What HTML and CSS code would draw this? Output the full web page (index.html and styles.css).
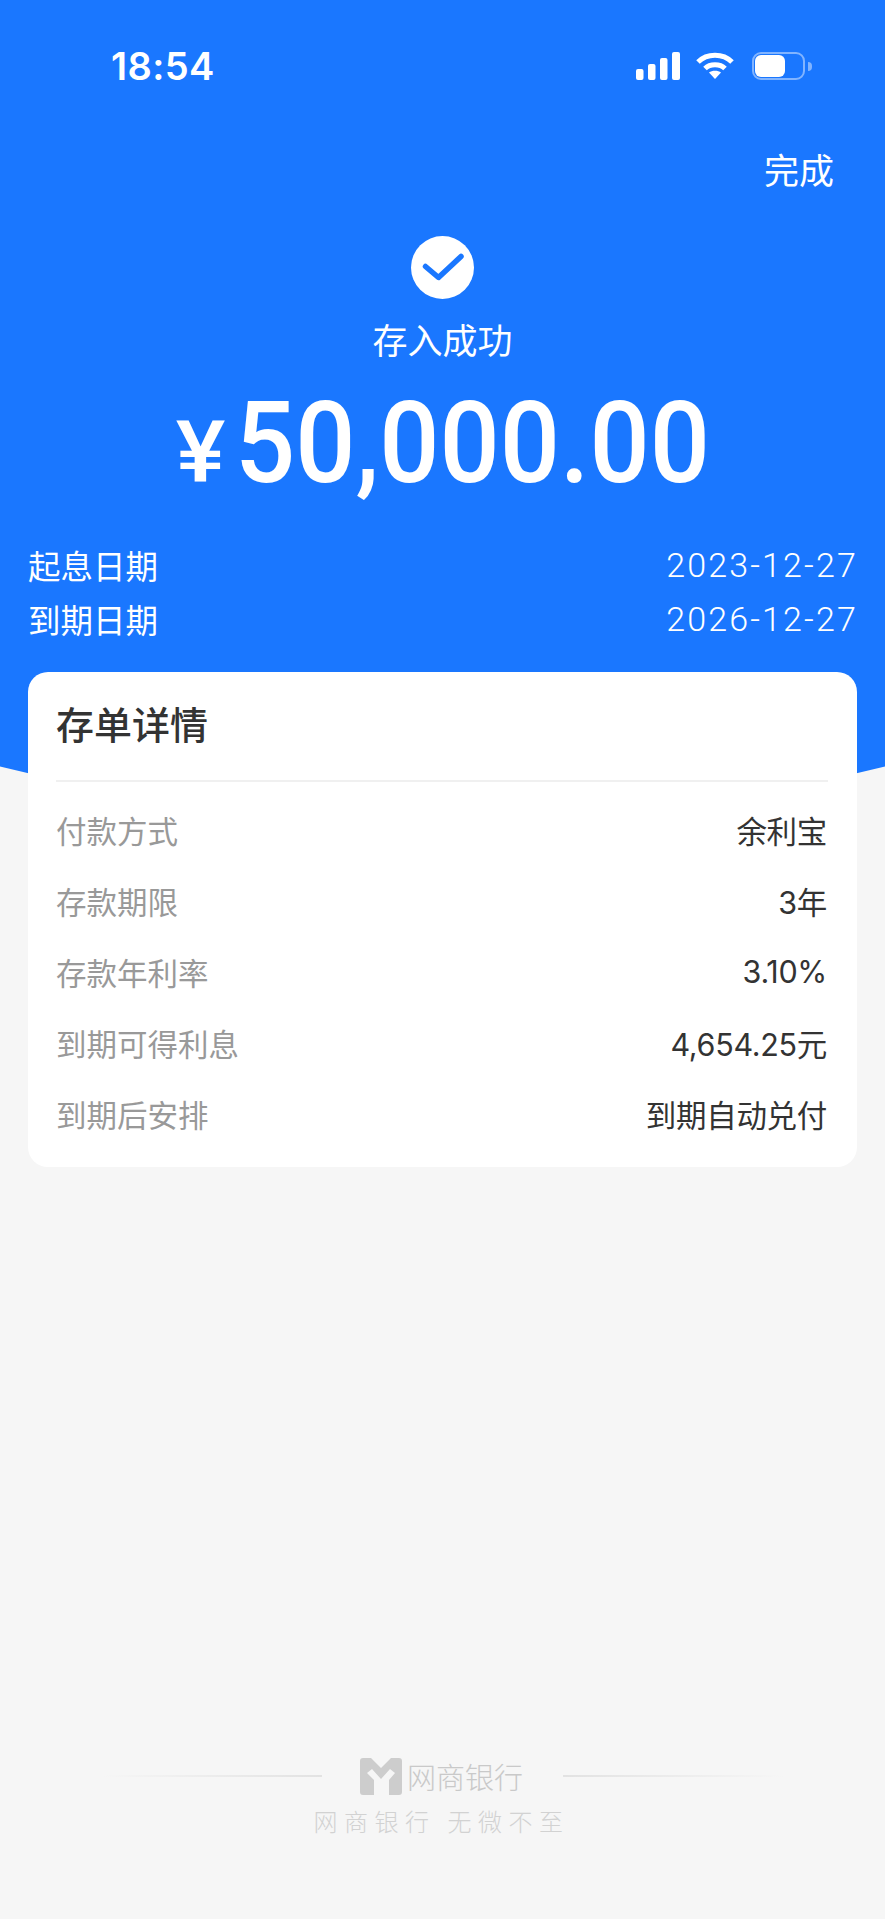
FILE: index.html
```html
<!DOCTYPE html>
<html lang="zh-CN">
  <head>
    <meta charset="UTF-8" />
    <meta name="viewport" content="width=device-width, initial-scale=1.0" />
    <title>存入成功</title>
    <link rel="stylesheet" href="styles.css">
  </head>
  <body>
    <div class="page">
      <div class="hero">
        <div class="status">
          <span class="time">18:54</span>
          <div class="status-icons">
            <svg class="signal" width="44" height="28" viewBox="0 0 44 28">
              <rect x="0" y="17" width="7.5" height="11" rx="2" />
              <rect x="12" y="12" width="7.5" height="16" rx="2" />
              <rect x="24" y="6" width="7.5" height="22" rx="2" />
              <rect x="36" y="0" width="8" height="28" rx="2" />
            </svg>
            <svg class="wifi" width="38" height="28" viewBox="0 0 38 28">
              <path d="M2 10 C11 1 27 1 36 10" />
              <path d="M9 16.5 C14 11.5 24 11.5 29 16.5" />
              <path class="wifi-dot" d="M13 20.5 C16 18 22 18 25 20.5 L19 27 Z" />
            </svg>
            <div class="battery"><i></i></div>
            <div class="battery-nub"></div>
          </div>
        </div>
        <div class="done-row"><a href="#" class="done">完成</a></div>
        <div class="check">
          <svg width="63" height="63" viewBox="0 0 63 63">
            <circle cx="31.5" cy="31.5" r="31.5" fill="#fff" />
            <path d="M14.5 30.5 L27.5 41.5 L50 20.5" fill="none" stroke="#1a77ff" stroke-width="5.5" stroke-linecap="round" stroke-linejoin="round" />
          </svg>
        </div>
        <div class="success">存入成功</div>
        <div class="amount"><span class="yen">¥</span><span class="num">50,000.00</span></div>
        <div class="date-row"><span>起息日期</span><span class="date">2023-12-27</span></div>
        <div class="date-row"><span>到期日期</span><span class="date">2026-12-27</span></div>
      </div>

      <div class="card">
        <div class="card-title">存单详情</div>
        <div class="row"><span class="label">付款方式</span><span class="value">余利宝</span></div>
        <div class="row"><span class="label">存款期限</span><span class="value">3年</span></div>
        <div class="row"><span class="label">存款年利率</span><span class="value">3.10%</span></div>
        <div class="row"><span class="label">到期可得利息</span><span class="value">4,654.25元</span></div>
        <div class="row"><span class="label">到期后安排</span><span class="value">到期自动兑付</span></div>
      </div>

      <div class="footer">
        <div class="brand">
          <div class="brand-line"></div>
          <svg class="brand-logo" width="42" height="37" viewBox="0 0 42 37">
            <path d="M3 0 H11 L21 10 L31 0 H39 Q42 0 42 3 V34 Q42 37 39 37 H29 V22 L35 15 L30 11 L21 21 L12 11 L7 15 L14 22 V37 H3 Q0 37 0 34 V3 Q0 0 3 0 Z" />
          </svg>
          <span class="brand-name">网商银行</span>
          <div class="brand-line right"></div>
        </div>
        <div class="slogan">网商银行 无微不至</div>
      </div>
    </div>
  </body>
</html>
```

FILE: styles.css
```css
* {
  margin: 0;
  padding: 0;
  box-sizing: border-box;
}
body {
  background: #f6f6f6;
  font-family: "Noto Sans CJK SC", "Noto Sans", sans-serif;
}
.page {
  width: 885px;
  height: 1919px;
  overflow: hidden;
  display: flex;
  flex-direction: column;
}
.hero {
  height: 821px;
  padding: 52px 28px 0;
  background: #1a77ff;
  color: #fff;
  clip-path: circle(1822px at 50% -1001px);
}
.status {
  display: flex;
  justify-content: space-between;
  align-items: center;
  height: 28px;
  padding: 0 0 0 83px;
}
.time {
  font-family: Inter, sans-serif;
  font-size: 38px;
  font-weight: 600;
  letter-spacing: 0.4px;
  line-height: 28px;
}
.status-icons {
  display: flex;
  align-items: center;
  margin-right: 45px;
}
.signal {
  fill: #fff;
  margin-right: 16px;
}
.wifi {
  margin-right: 18px;
}
.wifi path {
  fill: none;
  stroke: #fff;
  stroke-width: 5;
}
.wifi .wifi-dot {
  fill: #fff;
  stroke: none;
}
.battery {
  width: 53px;
  height: 28px;
  padding: 1px;
  border: 2px solid rgba(255, 255, 255, 0.45);
  border-radius: 9px;
}
.battery i {
  display: block;
  width: 30px;
  height: 100%;
  background: #fff;
  border-radius: 6px;
}
.battery-nub {
  width: 4px;
  height: 9px;
  margin-left: 3px;
  background: rgba(255, 255, 255, 0.45);
  border-radius: 0 4px 4px 0;
}
.done-row {
  display: flex;
  justify-content: flex-end;
  margin-top: 67px;
  padding-right: 23px;
}
.done {
  color: #fff;
  text-decoration: none;
  font-size: 35px;
  line-height: 44px;
}
.check {
  display: flex;
  justify-content: center;
  margin-top: 45px;
}
.check svg {
  display: block;
}
.success {
  margin-top: 18px;
  text-align: center;
  font-size: 35px;
  line-height: 44px;
}
.amount {
  display: flex;
  justify-content: center;
  align-items: baseline;
  margin-top: 12px;
  height: 165px;
  line-height: 140px;
  font-family: Roboto, sans-serif;
  font-weight: 500;
}
.yen {
  display: inline-block;
  font-size: 85px;
  margin-right: 12px;
  transform: scaleX(1.1);
}
.num {
  display: inline-block;
  font-size: 114px;
  transform: scaleX(0.93);
  transform-origin: left center;
  margin-right: -38px;
}
.date-row {
  display: flex;
  justify-content: space-between;
  font-size: 32.5px;
  line-height: 54px;
}
.date {
  font-family: Roboto, sans-serif;
  font-size: 34px;
  font-weight: 300;
  letter-spacing: 2.15px;
  margin-right: -1px;
}
.card {
  position: relative;
  margin: -149px 28px 0;
  padding: 0 29px 0 28px;
  height: 495px;
  background: #fff;
  border-radius: 20px;
}
.card-title {
  height: 110px;
  border-bottom: 2px solid #f0f0f0;
  font-size: 38px;
  font-weight: 500;
  line-height: 101px;
  color: #333;
}
.row {
  display: flex;
  justify-content: space-between;
  align-items: center;
  height: 71px;
  padding-right: 1px;
  font-size: 30.5px;
}
.card-title + .row {
  margin-top: 12px;
}
.label {
  color: #999;
}
.value {
  font-family: Inter, "Noto Sans CJK SC", sans-serif;
  letter-spacing: -0.3px;
  color: #333;
}
.footer {
  margin-top: 589px;
  display: flex;
  flex-direction: column;
  align-items: center;
}
.brand {
  display: flex;
  align-items: center;
  width: 680px;
}
.brand-line {
  flex: 1;
  height: 2px;
  background: linear-gradient(to right, rgba(225, 225, 225, 0), #e2e2e2);
}
.brand-line.right {
  background: linear-gradient(to left, rgba(225, 225, 225, 0), #e2e2e2);
}
.brand-logo {
  fill: #cdcdcd;
  margin: 0 5px 0 38px;
}
.brand-name {
  margin-right: 40px;
  font-size: 29px;
  line-height: 40px;
  font-weight: 300;
  color: #c9c9c9;
}
.slogan {
  margin-top: 8px;
  padding-right: 2px;
  font-size: 24px;
  line-height: 34px;
  letter-spacing: 6.5px;
  font-weight: 300;
  color: #d2d2d2;
}
```
